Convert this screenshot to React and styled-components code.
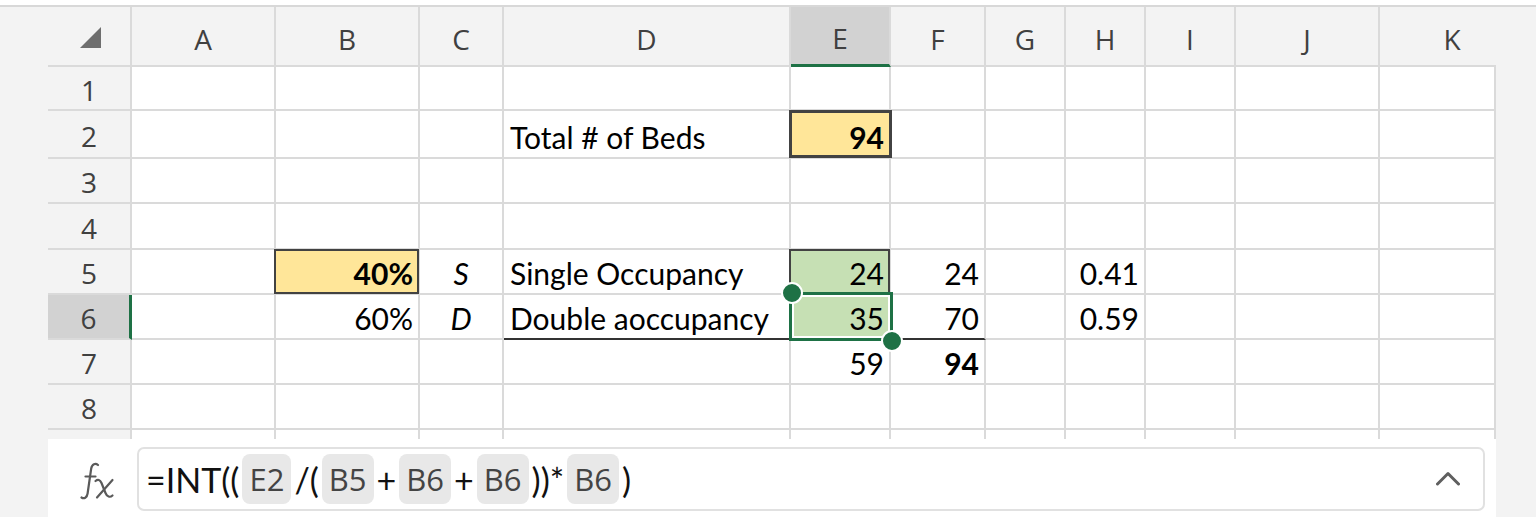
import styled, { createGlobalStyle, css } from "styled-components";

const GlobalStyle = createGlobalStyle`
  html, body {
    margin: 0;
    padding: 0;
    background: #ffffff;
  }
  body {
    font-family: "Lato", "Liberation Sans", sans-serif;
  }
  * {
    box-sizing: border-box;
  }
`;

const GRID = "#dadada";
const GREEN = "#1e7145";

const COLS = [
  { key: "A", w: 144 },
  { key: "B", w: 144 },
  { key: "C", w: 84 },
  { key: "D", w: 287 },
  { key: "E", w: 100 },
  { key: "F", w: 95 },
  { key: "G", w: 80 },
  { key: "H", w: 80 },
  { key: "I", w: 90 },
  { key: "J", w: 144 },
  { key: "K", w: 116, labelShift: 28 },
];

const ROWS = [
  { n: 1, h: 44, cells: {} },
  {
    n: 2,
    h: 48,
    cells: {
      D: { v: "Total # of Beds" },
      E: { v: "94", bold: true, align: "right", fill: "#ffe699", box: "thick" },
    },
  },
  { n: 3, h: 45, cells: {} },
  { n: 4, h: 46, cells: {} },
  {
    n: 5,
    h: 45,
    cells: {
      B: { v: "40%", bold: true, align: "right", fill: "#ffe699", box: "thin" },
      C: { v: "S", italic: true, align: "center" },
      D: { v: "Single Occupancy" },
      E: { v: "24", align: "right", fill: "#c6e0b4", box: "thin" },
      F: { v: "24", align: "right" },
      H: { v: "0.41", align: "right" },
    },
  },
  {
    n: 6,
    h: 45,
    active: true,
    cells: {
      B: { v: "60%", align: "right" },
      C: { v: "D", italic: true, align: "center" },
      D: { v: "Double aoccupancy", under: true },
      E: { v: "35", align: "right", fill: "#c6e0b4", under: true, selected: true },
      F: { v: "70", align: "right", under: true },
      H: { v: "0.59", align: "right" },
    },
  },
  { n: 7, h: 45, cells: { E: { v: "59", align: "right" }, F: { v: "94", bold: true, align: "right" } } },
  { n: 8, h: 45, cells: {} },
];

const FxIcon = () => (
  <FxSvg width="37" height="38" viewBox="0 0 37 38">
    <path d="M18 3 C15.5 0.8 12 1.8 11.2 6.5 L7.6 31.5 C7 35.8 4 37.2 1.5 35.5" />
    <path d="M5.5 14.5 H15.5" />
    <path d="M15.5 19 C17.8 17 20 17.6 21.5 21 L25.5 31 C27 34.8 30 35.8 32.5 33.5" />
    <path d="M32.5 18 L17 35.5" />
  </FxSvg>
);

const Chevron = () => (
  <ChevronSvg width="24" height="15" viewBox="0 0 24 15">
    <polyline points="1.5,13 12,2.5 22.5,13" />
  </ChevronSvg>
);

const App = () => {
  return (
    <>
      <GlobalStyle />
      <Page>
        <Frame>
          <Sheet>
            <HeaderRow>
              <Corner>
                <Triangle />
              </Corner>
              {COLS.map((c) => (
                <ColHead key={c.key} $w={c.w} $shift={c.labelShift} $active={c.key === "E"}>
                  {c.key}
                </ColHead>
              ))}
            </HeaderRow>
            {ROWS.map((r) => (
              <Row key={r.n} $h={r.h}>
                <RowHead $active={r.active}>{r.n}</RowHead>
                {COLS.map((c) => {
                  const cell = r.cells[c.key] || {};
                  return (
                    <Cell
                      key={c.key}
                      $w={c.w}
                      $align={cell.align}
                      $bold={cell.bold}
                      $italic={cell.italic}
                      $fill={cell.fill}
                      $box={cell.box}
                      $under={cell.under}
                      $selected={cell.selected}
                    >
                      {cell.v}
                      {cell.selected && (
                        <>
                          <Selection />
                          <Handle $corner="tl" />
                          <Handle $corner="br" />
                        </>
                      )}
                    </Cell>
                  );
                })}
              </Row>
            ))}
            <Row $h={9}>
              <RowHead $cut />
              {COLS.map((c) => (
                <Cell key={c.key} $w={c.w} $cut />
              ))}
            </Row>
            <FormulaBar>
              <FxIcon />
              <FormulaBox>
                <FormulaText>=INT((</FormulaText>
                <RefChip>E2</RefChip>
                <FormulaText>/(</FormulaText>
                <RefChip>B5</RefChip>
                <FormulaText>+</FormulaText>
                <RefChip>B6</RefChip>
                <FormulaText>+</FormulaText>
                <RefChip>B6</RefChip>
                <FormulaText>))*</FormulaText>
                <RefChip>B6</RefChip>
                <FormulaText>)</FormulaText>
                <Chevron />
              </FormulaBox>
            </FormulaBar>
          </Sheet>
          <SideRail />
        </Frame>
      </Page>
    </>
  );
};

export default App;

const Page = styled.div`
  width: 1536px;
  height: 531px;
  padding-top: 5px;
  background: #ffffff;
  overflow: hidden;
`;

const Frame = styled.div`
  display: flex;
  height: 512px;
  padding-left: 48px;
  background: #f3f3f3;
  border-top: 2px solid #d8d8d8;
`;

const Sheet = styled.div`
  width: 1448px;
  display: flex;
  flex-direction: column;
`;

const SideRail = styled.div`
  width: 40px;
  background: #f3f3f3;
`;

const HeaderRow = styled.div`
  display: flex;
  height: 60px;
  flex: none;
  font-family: "Open Sans", "Noto Sans", sans-serif;
`;

const Corner = styled.div`
  width: 84px;
  display: flex;
  align-items: flex-end;
  justify-content: flex-end;
  padding: 0 29px 17px 0;
  border-right: 2px solid ${GRID};
  border-bottom: 2px solid ${GRID};
`;

const Triangle = styled.div`
  width: 0;
  height: 0;
  border-left: 21px solid transparent;
  border-bottom: 21px solid #6e6e6e;
`;

const ColHead = styled.div`
  width: ${(p) => p.$w}px;
  flex: none;
  display: flex;
  align-items: center;
  justify-content: center;
  padding-top: 5px;
  padding-left: ${(p) => p.$shift || 0}px;
  font-size: 28px;
  color: #404040;
  background: ${(p) => (p.$active ? "#d2d2d2" : "#f3f3f3")};
  border-right: ${(p) => (p.$shift ? "none" : `2px solid ${GRID}`)};
  border-bottom: ${(p) => (p.$active ? `3px solid ${GREEN}` : `2px solid ${GRID}`)};
  white-space: nowrap;
`;

const Row = styled.div`
  display: flex;
  height: ${(p) => p.$h}px;
  flex: none;
`;

const RowHead = styled.div`
  width: 84px;
  flex: none;
  display: flex;
  align-items: center;
  justify-content: center;
  padding-top: 3px;
  font-family: "Open Sans", "Noto Sans", sans-serif;
  font-size: 28px;
  color: #404040;
  background: ${(p) => (p.$active ? "#d2d2d2" : "#f3f3f3")};
  border-right: ${(p) => (p.$active ? `3px solid ${GREEN}` : `2px solid ${GRID}`)};
  border-bottom: ${(p) => (p.$cut ? "none" : `2px solid ${GRID}`)};
`;

const Cell = styled.div`
  width: ${(p) => p.$w}px;
  flex: none;
  position: relative;
  display: flex;
  align-items: flex-end;
  justify-content: ${(p) =>
    p.$align === "right" ? "flex-end" : p.$align === "center" ? "center" : "flex-start"};
  padding: ${(p) => (p.$align === "right" ? "0 5px 2px 0" : p.$align === "center" ? "0 0 2px 0" : "0 0 2px 6px")};
  font-size: 30px;
  line-height: 36px;
  color: #000000;
  white-space: nowrap;
  font-weight: ${(p) => (p.$bold ? 700 : 400)};
  font-style: ${(p) => (p.$italic ? "italic" : "normal")};
  background: ${(p) => p.$fill || "#ffffff"};
  border-right: 2px solid ${GRID};
  border-bottom: ${(p) => (p.$cut ? "none" : p.$under ? "2px solid #333333" : `2px solid ${GRID}`)};
  ${(p) =>
    p.$box &&
    css`
      z-index: 1;
      &::after {
        content: "";
        position: absolute;
        pointer-events: none;
        top: -1px;
        left: -2px;
        right: ${p.$box === "thick" ? -3 : -1}px;
        bottom: -1px;
        border: ${p.$box === "thick" ? 3 : 2}px solid #424242;
      }
    `}
  ${(p) =>
    p.$selected &&
    css`
      z-index: 2;
    `}
`;

const Selection = styled.div`
  position: absolute;
  top: -3px;
  left: -2px;
  width: 104px;
  height: 49px;
  border: 3px solid ${GREEN};
  box-shadow: inset 0 0 0 2px #ffffff;
  pointer-events: none;
`;

const Handle = styled.div`
  position: absolute;
  width: 22px;
  height: 22px;
  border-radius: 50%;
  background: ${GREEN};
  border: 2px solid #ffffff;
  ${(p) =>
    p.$corner === "tl"
      ? css`
          left: -10px;
          top: -13px;
        `
      : css`
          left: 90px;
          top: 35px;
        `}
`;

const FormulaBar = styled.div`
  flex: none;
  height: 78px;
  display: flex;
  align-items: flex-start;
  gap: 20px;
  padding: 8px 11px 6px 32px;
  background: #ffffff;
`;

const FxSvg = styled.svg`
  flex: none;
  margin-top: 15px;
  fill: none;
  stroke: #5a5a5a;
  stroke-width: 2.2;
  stroke-linecap: round;
  stroke-linejoin: round;
`;

const FormulaBox = styled.div`
  flex: 1;
  height: 64px;
  display: flex;
  align-items: center;
  gap: 3px;
  padding: 0 23px 0 7px;
  border: 2px solid #e1e1e1;
  border-radius: 7px;
  background: #ffffff;
`;

const FormulaText = styled.span`
  font-size: 34px;
  color: #111111;
  white-space: pre;
`;

const RefChip = styled.span`
  display: inline-flex;
  align-items: center;
  height: 50px;
  padding: 0 7px;
  border-radius: 8px;
  background: #e8e8e8;
  font-family: "Open Sans", "Noto Sans", sans-serif;
  font-size: 31px;
  color: #444444;
`;

const ChevronSvg = styled.svg`
  margin-left: auto;
  margin-top: -2px;
  fill: none;
  stroke: #5f5f5f;
  stroke-width: 3;
  stroke-linecap: round;
  stroke-linejoin: round;
`;
